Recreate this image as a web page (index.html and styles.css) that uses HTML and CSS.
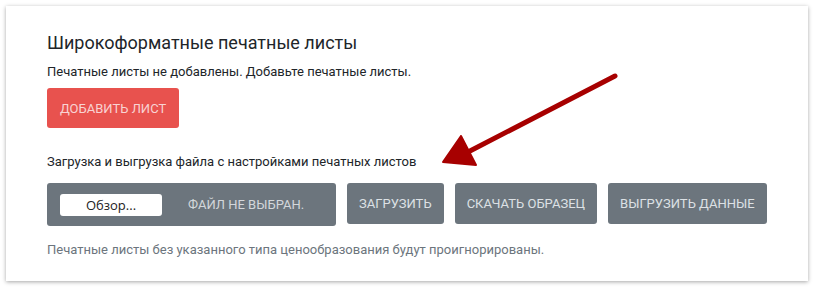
FILE: index.html
```html
<!DOCTYPE html>
<html lang="ru">
<head>
	<meta charset="utf-8">
	<title>Широкоформатные печатные листы</title>
	<link rel="stylesheet" href="styles.css">
</head>
<body>
	<div class="card">
		<h2 class="card-title">Широкоформатные печатные листы</h2>
		<p class="empty">Печатные листы не добавлены. Добавьте печатные листы.</p>
		<button class="btn btn-red">Добавить лист</button>

		<p class="label">Загрузка и выгрузка файла с настройками печатных листов</p>
		<div class="file-row">
			<div class="file-box">
				<span class="browse">Обзор...</span>
				<span class="file-name">Файл не выбран.</span>
			</div>
			<button class="btn btn-gray">Загрузить</button>
			<button class="btn btn-gray">Скачать образец</button>
			<button class="btn btn-gray">Выгрузить данные</button>
		</div>
		<p class="note">Печатные листы без указанного типа ценообразования будут проигнорированы.</p>
	</div>

	<svg class="arrow" width="814" height="287" viewBox="0 0 814 287">
		<line x1="615" y1="76" x2="468" y2="152" stroke="#a70000" stroke-width="5" stroke-linecap="round"/>
		<polygon points="461,136 443,162 476,165" fill="#a70000" stroke="#a70000" stroke-width="2" stroke-linejoin="round"/>
	</svg>
</body>
</html>
```
FILE: styles.css
```css
html, body {
	margin: 0;
	padding: 0;
	background: #ffffff;
}

body {
	padding: 6px;
	font-family: Roboto, "Liberation Sans", sans-serif;
	font-size: 13px;
	color: #212529;
}

.card {
	width: 761px;
	height: 229px;
	padding: 26px 0 20px 41px;
	background: #ffffff;
	box-shadow: 0 1px 4px rgba(0,0,0,0.35);
}

.card-title {
	margin: 0;
	font-size: 18px;
	font-weight: 400;
	line-height: 22px;
	color: #212529;
}

.empty {
	margin: 8px 0 0;
	line-height: 20px;
}

.btn {
	display: inline-flex;
	align-items: center;
	justify-content: center;
	border: 0;
	border-radius: 3px;
	font-family: Roboto, "Liberation Sans", sans-serif;
	font-size: 13px;
	text-transform: uppercase;
	white-space: nowrap;
	padding: 0 12px;
}

.btn-red {
	margin-top: 6px;
	height: 40px;
	padding: 0 13px;
	background: #e8524e;
	color: #f8d3d3;
}

.label {
	margin: 24px 0 0;
	line-height: 20px;
}

.file-row {
	display: flex;
	gap: 11px;
	margin-top: 11px;
	align-items: flex-start;
}

.file-box {
	display: flex;
	align-items: center;
	width: 289px;
	height: 43px;
	padding: 0 13px;
	box-sizing: border-box;
	background: #6c757d;
	border-radius: 3px;
}

.browse {
	display: flex;
	align-items: center;
	justify-content: center;
	width: 102px;
	height: 22px;
	background: #ffffff;
	border-radius: 3px;
	font-family: "Open Sans", sans-serif;
	font-size: 13px;
	color: #222;
}

.file-name {
	margin-left: 26px;
	text-transform: uppercase;
	color: #d3d7db;
}

.btn-gray {
	height: 41px;
	background: #6c757d;
	color: #dde1e5;
}

.note {
	margin: 14px 0 0;
	line-height: 20px;
	color: #6c757d;
}

.arrow {
	position: absolute;
	left: 0;
	top: 0;
	pointer-events: none;
}
```
